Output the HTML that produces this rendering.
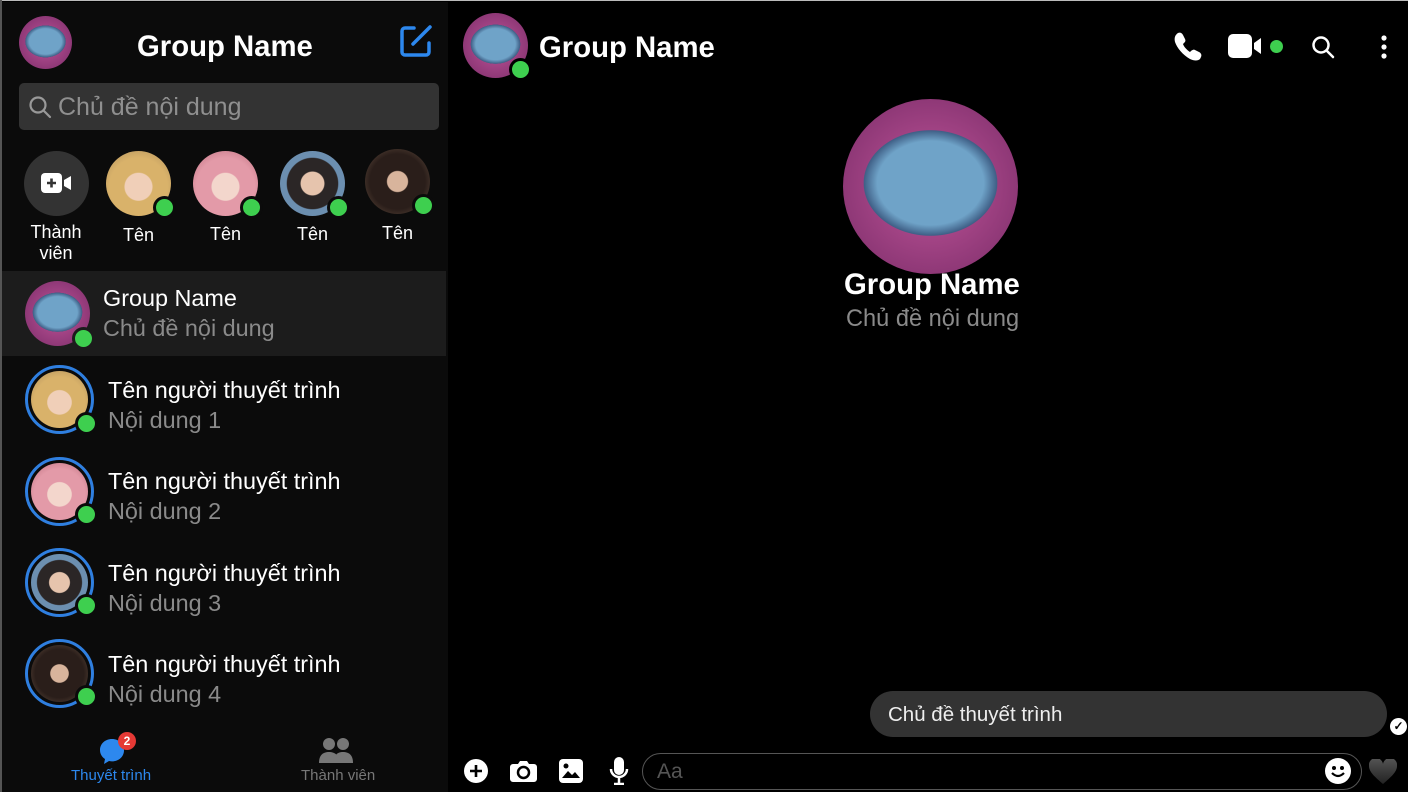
<!DOCTYPE html>
<html><head><meta charset="utf-8"><style>
*{margin:0;padding:0;box-sizing:border-box}
body{width:1408px;height:792px;background:#000;font-family:"Liberation Sans",Arial,sans-serif;color:#fff;position:relative;overflow:hidden}
.abs{position:absolute}
.left{left:2px;top:2px;width:446px;height:790px;background:#0b0b0b}
.frame{left:0;top:0;width:1408px;height:1px;background:#bbb}
.frame2{left:0;top:0;width:2px;height:792px;background:#555}
.grp{border-radius:50%;background:radial-gradient(ellipse 38% 30% at 50% 48%,#6fa3c8 0 80%,#3f5f86 100%,transparent 101%),radial-gradient(circle at 50% 50%,#c0559a,#7a2c68 100%)}
.p1{border-radius:50%;background:radial-gradient(circle at 50% 55%,#f0cfb8 0 28%,#d9b26a 30% 60%,#a98a5a 100%)}
.p2{border-radius:50%;background:radial-gradient(circle at 50% 55%,#f3d6cc 0 28%,#e39aa8 30% 60%,#b86b7a 100%)}
.p3{border-radius:50%;background:radial-gradient(circle at 50% 50%,#e6c4ad 0 25%,#2b2626 27% 55%,#6c8fb0 57% 70%,#ccc 100%)}
.p4{border-radius:50%;background:radial-gradient(circle at 50% 50%,#d8b49c 0 22%,#2a1e1a 24% 60%,#6b5444 100%)}
.dot{width:20px;height:20px;border-radius:50%;background:#3ecf4f;border:3px solid #0b0b0b}
.name{font-size:23.4px}
.sub{font-size:23.4px;color:#8a8a8a}
.ring{border:3px solid #2f7fe0;border-radius:50%;padding:3px}
</style></head><body>
<div class="abs left"></div>
<div class="abs frame"></div><div class="abs frame2"></div>

<div class="abs grp" style="left:19px;top:16px;width:53px;height:53px"></div>
<div class="abs" style="left:137px;top:30px;font-size:29.3px;font-weight:bold">Group Name</div>
<svg class="abs" style="left:399px;top:24px" width="34" height="34" viewBox="0 0 34 34" fill="none" stroke="#2d88ee" stroke-width="3.5" stroke-linecap="round" stroke-linejoin="round"><path d="M15 4H6a3 3 0 0 0-3 3v21a3 3 0 0 0 3 3h21a3 3 0 0 0 3-3v-9"/><path d="M14 20l17-17"/></svg>

<div class="abs" style="left:19px;top:83px;width:420px;height:47px;background:#333;border-radius:5px"></div>
<svg class="abs" style="left:28px;top:95px" width="24" height="24" viewBox="0 0 24 24" fill="none" stroke="#999" stroke-width="2.2"><circle cx="10" cy="10" r="7.5"/><path d="M15.5 15.5L22 22" stroke-linecap="round"/></svg>
<div class="abs" style="left:58px;top:93px;font-size:25px;color:#8f8f8f">Chủ đề nội dung</div>

<div class="abs" style="left:24px;top:151px;width:65px;height:65px;border-radius:50%;background:#333"></div>
<svg class="abs" style="left:41px;top:173px" width="32" height="20" viewBox="0 0 32 20"><rect x="0" y="0" width="21" height="20" rx="4" fill="#fff"/><path d="M6 10h9M10.5 5.5v9" stroke="#333" stroke-width="2.6"/><path d="M23 7l7-4v14l-7-4z" fill="#fff"/></svg>
<div class="abs" style="left:28px;top:222px;font-size:18px;text-align:center;width:56px;line-height:21px">Thành viên</div>

<div class="abs p1" style="left:106px;top:151px;width:65px;height:65px"></div><div class="abs dot" style="left:153px;top:196px;width:23px;height:23px"></div>
<div class="abs p2" style="left:193px;top:151px;width:65px;height:65px"></div><div class="abs dot" style="left:240px;top:196px;width:23px;height:23px"></div>
<div class="abs p3" style="left:280px;top:151px;width:65px;height:65px"></div><div class="abs dot" style="left:327px;top:196px;width:23px;height:23px"></div>
<div class="abs p4" style="left:365px;top:149px;width:65px;height:65px"></div><div class="abs dot" style="left:412px;top:194px;width:23px;height:23px"></div>
<div class="abs" style="left:123px;top:225px;font-size:18px">Tên</div>
<div class="abs" style="left:210px;top:224px;font-size:18px">Tên</div>
<div class="abs" style="left:297px;top:224px;font-size:18px">Tên</div>
<div class="abs" style="left:382px;top:223px;font-size:18px">Tên</div>

<div class="abs" style="left:2px;top:271px;width:444px;height:85px;background:#1c1c1c"></div>
<div class="abs grp" style="left:25px;top:281px;width:65px;height:65px"></div>
<div class="abs dot" style="left:72px;top:327px;width:23px;height:23px;border-color:#1c1c1c"></div>
<div class="abs name" style="left:103px;top:285px">Group Name</div>
<div class="abs sub" style="left:103px;top:315px">Chủ đề nội dung</div>

<div class="abs ring" style="left:25px;top:365px;width:69px;height:69px"><div class="p1" style="width:57px;height:57px"></div></div>
<div class="abs dot" style="left:75px;top:412px;width:23px;height:23px"></div>
<div class="abs name" style="left:108px;top:377px">Tên người thuyết trình</div>
<div class="abs sub" style="left:108px;top:407px">Nội dung 1</div>

<div class="abs ring" style="left:25px;top:457px;width:69px;height:69px"><div class="p2" style="width:57px;height:57px"></div></div>
<div class="abs dot" style="left:75px;top:503px;width:23px;height:23px"></div>
<div class="abs name" style="left:108px;top:468px">Tên người thuyết trình</div>
<div class="abs sub" style="left:108px;top:498px">Nội dung 2</div>

<div class="abs ring" style="left:25px;top:548px;width:69px;height:69px"><div class="p3" style="width:57px;height:57px"></div></div>
<div class="abs dot" style="left:75px;top:594px;width:23px;height:23px"></div>
<div class="abs name" style="left:108px;top:560px">Tên người thuyết trình</div>
<div class="abs sub" style="left:108px;top:590px">Nội dung 3</div>

<div class="abs ring" style="left:25px;top:639px;width:69px;height:69px"><div class="p4" style="width:57px;height:57px"></div></div>
<div class="abs dot" style="left:75px;top:685px;width:23px;height:23px"></div>
<div class="abs name" style="left:108px;top:651px">Tên người thuyết trình</div>
<div class="abs sub" style="left:108px;top:681px">Nội dung 4</div>

<svg class="abs" style="left:99px;top:737px" width="28" height="28" viewBox="0 0 28 28"><path d="M13 2C6 2 1 7 1 13c0 4 2 7 5 9l-1 5 5-3c1 .3 2 .4 3 .4 7 0 12-5 12-11S20 2 13 2z" fill="#2d88ee"/></svg>
<div class="abs" style="left:118px;top:732px;width:18px;height:18px;border-radius:50%;background:#e53935;font-size:12px;font-weight:bold;text-align:center;line-height:18px">2</div>
<div class="abs" style="left:71px;top:767px;font-size:15px;color:#2d88ee">Thuyết trình</div>
<svg class="abs" style="left:319px;top:737px" width="34" height="26" viewBox="0 0 34 26" fill="#777"><circle cx="10" cy="7" r="6"/><circle cx="24" cy="7" r="6"/><path d="M0 26c0-8 4-11 10-11s10 3 10 11z"/><path d="M15 26c0-8 3-11 9-11s10 3 10 11z"/></svg>
<div class="abs" style="left:301px;top:767px;font-size:15px;color:#777">Thành viên</div>

<!-- right -->
<div class="abs grp" style="left:463px;top:13px;width:65px;height:65px"></div>
<div class="abs dot" style="left:509px;top:58px;width:23px;height:23px;border-color:#000"></div>
<div class="abs" style="left:539px;top:31px;font-size:29.3px;font-weight:bold">Group Name</div>
<svg class="abs" style="left:1173px;top:31px" width="32" height="30" viewBox="0 0 32 30"><path d="M5 2c2-1 4 0 5 2l2 4c1 2 0 3-1 4l-1 1c1 3 4 6 7 8l1-1c1-1 3-2 4-1l4 2c2 1 3 3 2 5l-1 2c-2 2-6 2-10 0C10 24 4 17 2 11 1 7 2 4 5 2z" fill="#fff"/></svg>
<svg class="abs" style="left:1228px;top:34px" width="38" height="24" viewBox="0 0 38 24" fill="#fff"><rect x="0" y="0" width="24" height="24" rx="5"/><path d="M26 9l7-5v16l-7-5z"/></svg>
<div class="abs" style="left:1270px;top:40px;width:13px;height:13px;border-radius:50%;background:#3ecf4f"></div>
<svg class="abs" style="left:1311px;top:35px" width="24" height="24" viewBox="0 0 24 24" fill="none" stroke="#fff" stroke-width="2.5"><circle cx="10" cy="10" r="7.5"/><path d="M15.5 15.5L22 22" stroke-linecap="round"/></svg>
<svg class="abs" style="left:1379px;top:35px" width="10" height="24" viewBox="0 0 10 24" fill="#fff"><circle cx="5" cy="3" r="2.6"/><circle cx="5" cy="12" r="2.6"/><circle cx="5" cy="21" r="2.6"/></svg>

<div class="abs grp" style="left:843px;top:99px;width:175px;height:175px"></div>
<div class="abs" style="left:844px;top:268px;font-size:29.3px;font-weight:bold">Group Name</div>
<div class="abs" style="left:846px;top:306px;font-size:23.6px;color:#8a8a8a">Chủ đề nội dung</div>

<div class="abs" style="left:870px;top:691px;width:517px;height:46px;border-radius:23px;background:#333"></div>
<div class="abs" style="left:888px;top:703px;font-size:20.5px;color:#eee">Chủ đề thuyết trình</div>
<div class="abs" style="left:1390px;top:718px;width:17px;height:17px;border-radius:50%;background:#fff;color:#000;font-size:12px;text-align:center;line-height:17px;font-weight:bold">✓</div>

<svg class="abs" style="left:464px;top:759px" width="24" height="24" viewBox="0 0 24 24"><circle cx="12" cy="12" r="12" fill="#fff"/><path d="M6 12h12M12 6v12" stroke="#000" stroke-width="2.6"/></svg>
<svg class="abs" style="left:510px;top:759px" width="27" height="24" viewBox="0 0 27 24"><path d="M3 5h5l2-3h7l2 3h5a3 3 0 0 1 3 3v12a3 3 0 0 1-3 3H3a3 3 0 0 1-3-3V8a3 3 0 0 1 3-3z" fill="#fff"/><circle cx="13.5" cy="13.5" r="5.5" fill="none" stroke="#000" stroke-width="2.5"/></svg>
<svg class="abs" style="left:559px;top:759px" width="24" height="24" viewBox="0 0 24 24"><rect width="24" height="24" rx="4" fill="#fff"/><path d="M3 19l6-7 4 4 3-3 5 6z" fill="#000"/><circle cx="7" cy="7" r="2.5" fill="#000"/></svg>
<svg class="abs" style="left:609px;top:757px" width="20" height="28" viewBox="0 0 20 28"><rect x="5" y="0" width="10" height="18" rx="5" fill="#fff"/><path d="M2 12a8 8 0 0 0 16 0M10 20v6M5 27h10" fill="none" stroke="#fff" stroke-width="2.5"/></svg>
<div class="abs" style="left:642px;top:753px;width:720px;height:37px;border:1px solid #555;border-radius:19px"></div>
<div class="abs" style="left:657px;top:760px;font-size:21px;color:#555">Aa</div>
<svg class="abs" style="left:1325px;top:758px" width="26" height="26" viewBox="0 0 26 26"><circle cx="13" cy="13" r="13" fill="#fff"/><circle cx="9" cy="10" r="2" fill="#000"/><circle cx="17" cy="10" r="2" fill="#000"/><path d="M7 15q6 6 12 0" fill="none" stroke="#000" stroke-width="2.2"/></svg>
<svg class="abs" style="left:1369px;top:759px" width="28" height="26" viewBox="0 0 28 26"><defs><linearGradient id="h" x1="0" y1="0" x2="0" y2="1"><stop offset="0" stop-color="#555"/><stop offset="1" stop-color="#222"/></linearGradient></defs><path d="M14 25C6 18 0 13 0 7a7 7 0 0 1 14-2 7 7 0 0 1 14 2c0 6-6 11-14 18z" fill="url(#h)"/></svg>
</body></html>
